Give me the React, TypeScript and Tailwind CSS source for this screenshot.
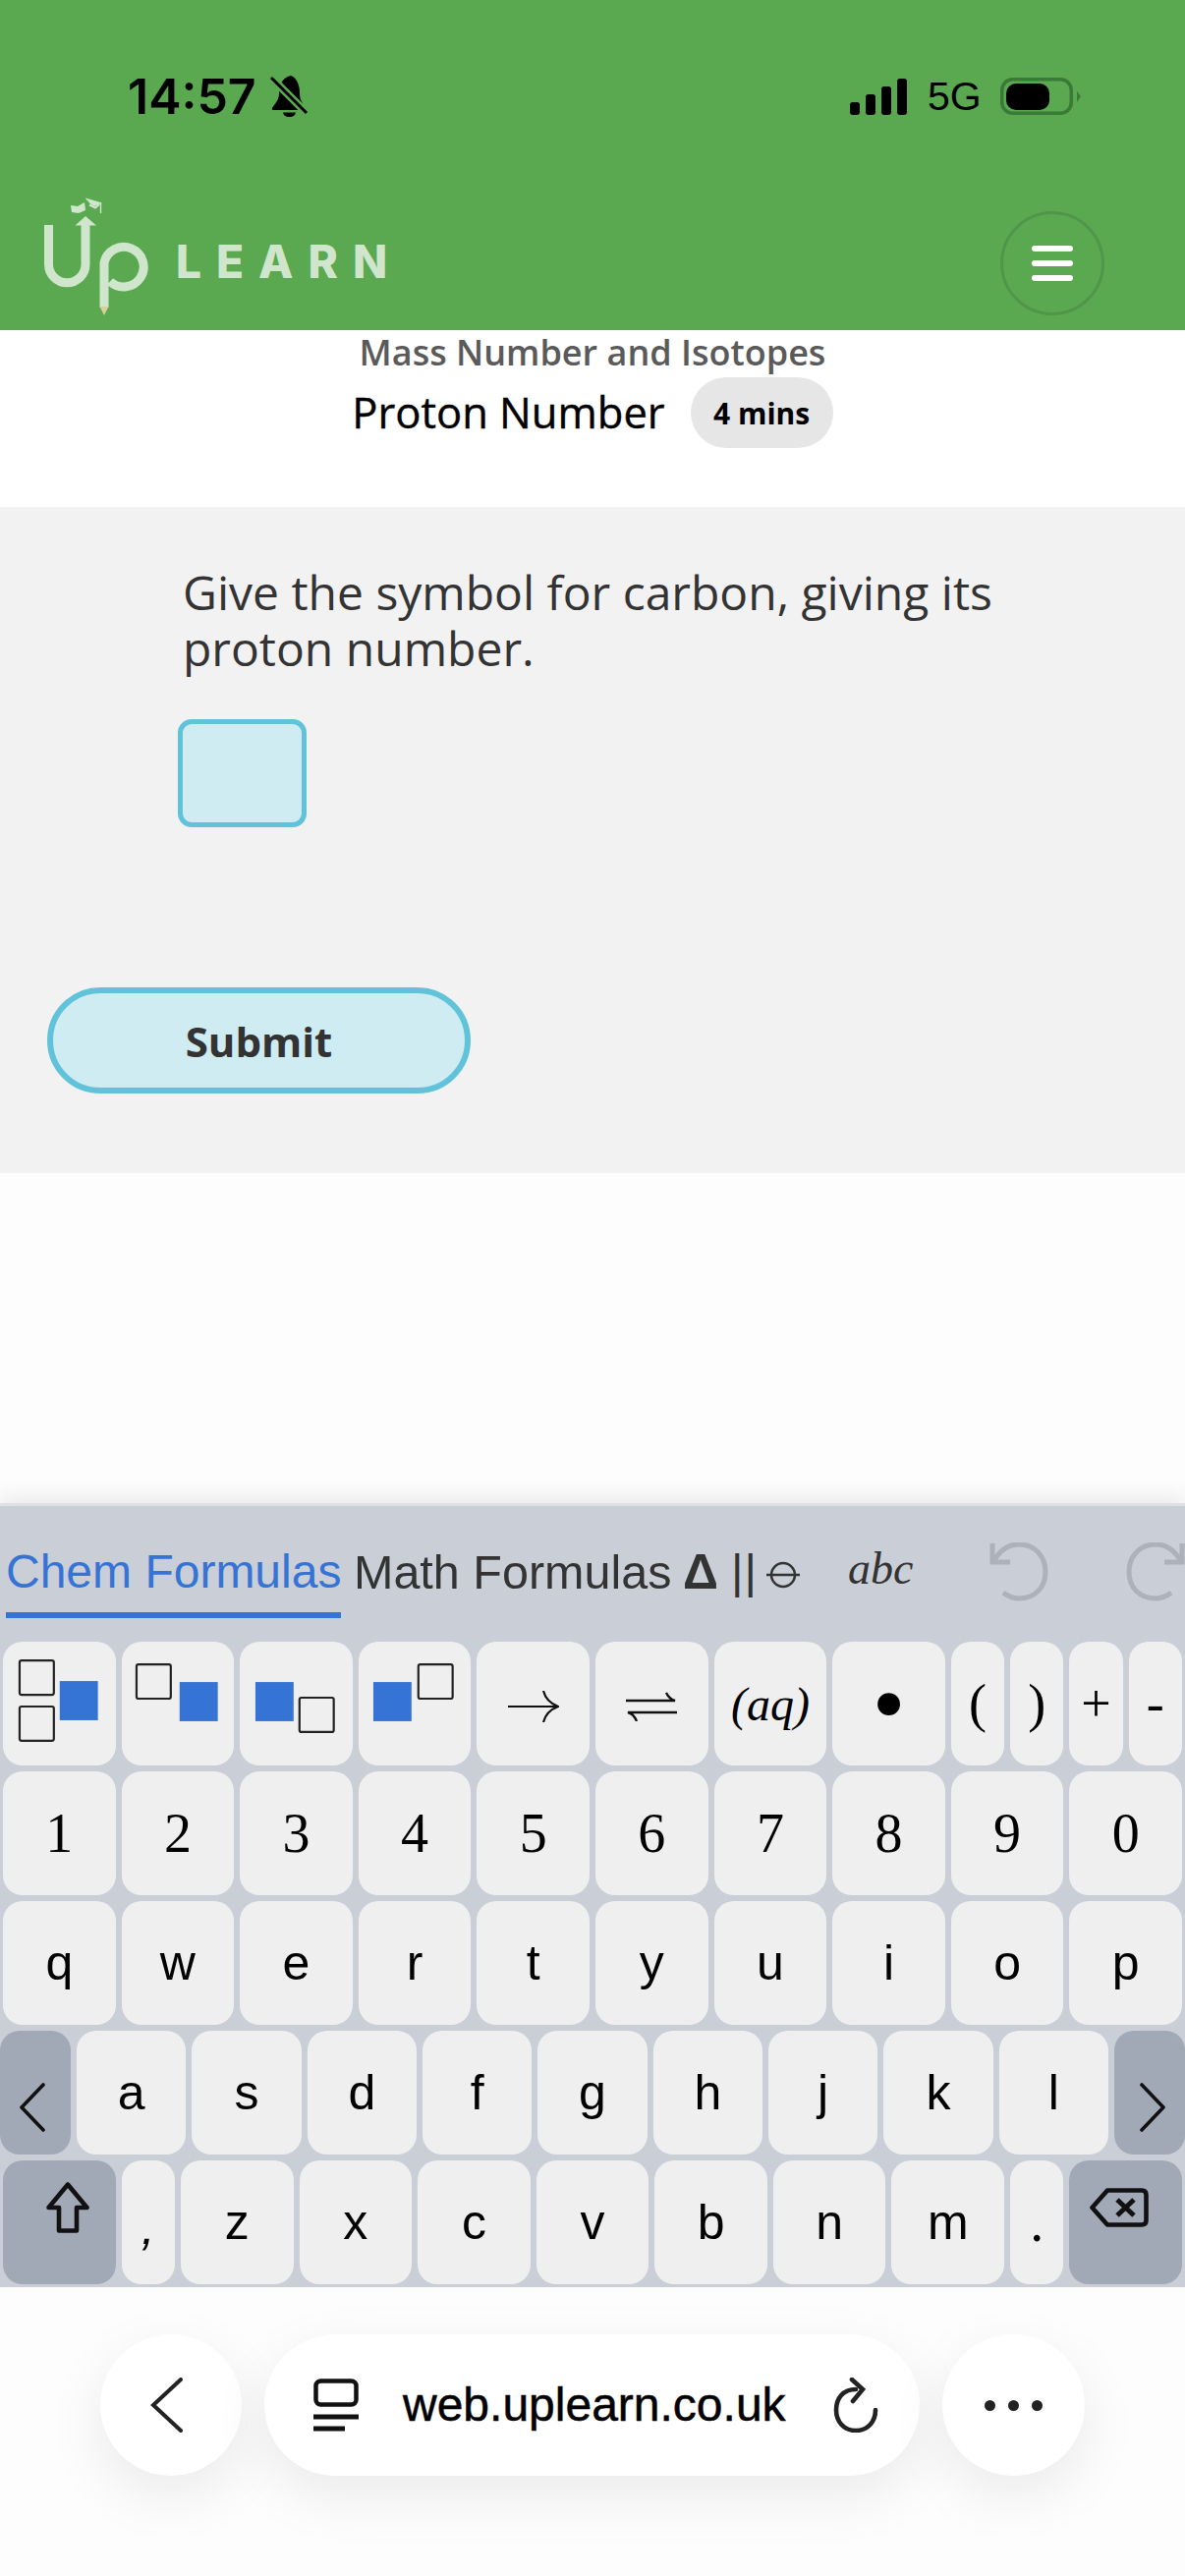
import React from 'react';

const SANS = "font-['Liberation_Sans',Arial,sans-serif]";
const OPEN = "font-['Open_Sans',sans-serif]";
const SERIF = "font-['Liberation_Serif',serif]";

const Key: React.FC<{ className?: string; children?: React.ReactNode }> = ({ className = '', children }) => (
  <div className={`h-[126px] rounded-[20px] bg-[#efeff0] flex items-center justify-center text-black ${className}`}>
    {children}
  </div>
);

const TemplateIcon: React.FC<{ blue: [number, number]; boxes: [number, number][] }> = ({ blue, boxes }) => (
  <svg viewBox="0 0 115 126" className="w-full h-full">
    <rect x={blue[0]} y={blue[1]} width="39" height="40" fill="#3574d4" />
    {boxes.map(([x, y]) => (
      <rect key={y} x={x} y={y} width="35" height="35" rx="2" fill="none" stroke="#222" strokeWidth="2.2" />
    ))}
  </svg>
);

const Logo = () => (
  <svg viewBox="40 27 120 125" className="w-[120px] h-[125px] shrink-0" fill="none">
    <path d="M49.5 59V99A18.75 18.75 0 0 0 87 99V58" stroke="#cfe6cc" strokeWidth="9" />
    <path d="M87 50L98 59.5H76.5Z" fill="#cfe6cc" />
    <path d="M106 143V97.5A20.3 20.3 0 1 1 112 116.5" stroke="#cfe6cc" strokeWidth="9" />
    <path d="M101.5 142H110.5L106 151Z" fill="#d9cf9a" />
    <path d="M72 39L79 40L86 36L87 44L80 47L73 46Z" fill="#cfe6cc" />
    <path d="M87 31.5L104 36.5L96 40L92 37.5L87 32Z" fill="#cfe6cc" />
    <path d="M91 38.5L97 41.5L101 38" stroke="#cfe6cc" strokeWidth="2" />
    <path d="M102.5 37V47" stroke="#cfe6cc" strokeWidth="1.4" />
  </svg>
);

const row2 = ['1', '2', '3', '4', '5', '6', '7', '8', '9', '0'];
const row3 = ['q', 'w', 'e', 'r', 't', 'y', 'u', 'i', 'o', 'p'];
const row4 = ['a', 's', 'd', 'f', 'g', 'h', 'j', 'k', 'l'];
const row5 = ['z', 'x', 'c', 'v', 'b', 'n', 'm'];

const App: React.FC = () => {
  return (
    <div className="w-[1206px] h-[2622px] flex flex-col bg-[#fdfdfd] overflow-hidden">
      <header className="h-[336px] shrink-0 bg-[#5aa850] flex flex-col">
        <div className={`mt-[77px] h-[42px] pl-[130px] pr-[106px] flex items-center justify-between text-black ${SANS}`}>
          <div className="flex items-center">
            <span className="w-[144px] text-[50px] font-semibold leading-none font-['Inter',sans-serif]">14:57</span>
            <svg viewBox="0 0 40 42" className="w-[40px] h-[42px]">
              <path d="M22 0C13 2 10 10 10 18C10 25 6 28 3 33Q2 35 5 35H35Q38 35 37 33C34 28 31 25 31 18C31 10 28 2 22 0Z" fill="#000" />
              <path d="M14 37.5H27C26 41 24 42 20.5 42C17 42 15 41 14 37.5Z" fill="#000" />
              <path d="M0 0L40 40" stroke="#5aa850" strokeWidth="8" />
              <path d="M2 2L38 38" stroke="#000" strokeWidth="3" />
            </svg>
          </div>
          <div className="flex items-center">
            <svg viewBox="0 0 58 37" className="w-[58px] h-[37px]">
              <rect x="0" y="24" width="10" height="13" rx="3" fill="#000" />
              <rect x="16" y="16" width="10" height="21" rx="3" fill="#000" />
              <rect x="32" y="8" width="10" height="29" rx="3" fill="#000" />
              <rect x="48" y="0" width="10" height="37" rx="3" fill="#000" />
            </svg>
            <span className="ml-[21px] w-[53px] text-[41px] leading-none">5G</span>
            <svg viewBox="0 0 82 38" className="ml-[21px] w-[82px] h-[38px]">
              <rect x="1.75" y="1.75" width="70.5" height="34.5" rx="11" fill="none" stroke="#3a7a36" strokeWidth="3.5" />
              <rect x="6" y="6" width="44" height="27" rx="10" fill="#000" />
              <path d="M78 14L82 19L78 25Z" fill="#3a7a36" />
            </svg>
          </div>
        </div>
        <div className="mt-[78px] flex items-start pl-[40px] pr-[82px]">
          <Logo />
          <span className="ml-[19px] mt-[40px] text-[46px] leading-[58px] font-extrabold tracking-[15px] text-[#cfe6cc] font-['Inter',sans-serif]">
            LEARN
          </span>
          <div className="ml-auto mt-[18px] w-[106px] h-[106px] rounded-full border-[3px] border-[#50964a] flex flex-col items-center justify-center gap-[9px]">
            <span className="w-[42px] h-[6px] rounded-full bg-white" />
            <span className="w-[42px] h-[6px] rounded-full bg-white" />
            <span className="w-[42px] h-[6px] rounded-full bg-white" />
          </div>
        </div>
      </header>

      <section className={`h-[180px] shrink-0 bg-white flex flex-col items-center ${OPEN}`}>
        <p className="mt-0 text-[36px] leading-[46px] font-semibold text-[#5a5a5a]">Mass Number and Isotopes</p>
        <div className="mt-[2px] flex items-center">
          <h1 className="text-[43.5px] leading-[72px] text-black [-webkit-text-stroke:0.4px_black]">Proton Number</h1>
          <span className="ml-[26px] h-[72px] w-[145px] rounded-full bg-[#e6e6e6] flex items-center justify-center text-[30px] font-bold text-black">
            4 mins
          </span>
        </div>
      </section>

      <section className={`h-[678px] shrink-0 bg-[#f2f2f2] ${OPEN}`}>
        <p className="ml-[186px] mt-[58px] w-[860px] text-[48px] leading-[57px] text-[#333]">
          Give the symbol for carbon, giving its proton number.
        </p>
        <div className="ml-[181px] mt-[44px] w-[131px] h-[110px] rounded-[14px] border-[5px] border-[#60c3da] bg-[#ceecf2]" />
        <button className="block ml-[48px] mt-[163px] w-[431px] h-[108px] rounded-full border-[6px] border-[#60c3da] bg-[#ceecf2] text-[42px] font-bold text-[#333]">
          Submit
        </button>
      </section>

      <div className="flex-1" />

      <section className={`relative h-[798px] shrink-0 bg-[#c9ced7] border-t-[3px] border-[#dfe0e2] shadow-[0_-8px_18px_rgba(0,0,0,0.07)] ${SANS}`}>
        <div className="h-[138px] pt-[37px] flex items-start">
          <div className="ml-[6px] w-[341px] h-[77px] border-b-[6px] border-[#3574d4] text-[#3574d4] text-[48px] leading-[60px] whitespace-nowrap">
            Chem Formulas
          </div>
          <div className="ml-[13px] w-[326px] text-[#333] text-[48.5px] leading-[60px] whitespace-nowrap">Math Formulas</div>
          <div className="ml-[9px] w-[40px] text-[#333] text-[50px] leading-[60px] font-bold">Δ</div>
          <div className="ml-[9px] w-[24px] text-[#333] text-[48px] leading-[60px] whitespace-nowrap tracking-[1px]">||</div>
          <svg viewBox="0 0 34 28" className="ml-[12px] mt-[19px] w-[34px] h-[28px]" fill="none" stroke="#333" strokeWidth="2.5">
            <circle cx="17" cy="14" r="12" />
            <path d="M0 14H34" />
          </svg>
          <div className={`ml-[49px] mt-[2px] w-[70px] text-[#333] text-[46px] leading-[50px] italic ${SERIF}`}>abc</div>
          <svg viewBox="0 0 60 60" className="ml-[74px] w-[60px] h-[60px]" fill="none" stroke="#acb1ba" strokeWidth="5">
            <path d="M3 1V20H21" />
            <path d="M4 20C10 8 18 2 30 2C46 2 57 14 57 30C57 46 46 57 30 57C24 57 19 55 14 51" />
          </svg>
          <svg viewBox="0 0 60 60" className="ml-[79px] w-[60px] h-[60px]" fill="none" stroke="#acb1ba" strokeWidth="5">
            <path d="M57 1V20H39" />
            <path d="M56 20C50 8 42 2 30 2C14 2 3 14 3 30C3 46 14 57 30 57C36 57 41 55 46 51" />
          </svg>
        </div>

        <div className="flex flex-col gap-[6px]">
          <div className="px-[3px] grid grid-cols-[repeat(20,minmax(0,1fr))] gap-x-[6px]">
            <Key className="col-span-2">
              <TemplateIcon blue={[58, 40]} boxes={[[17, 19], [17, 66]]} />
            </Key>
            <Key className="col-span-2">
              <TemplateIcon blue={[59, 41]} boxes={[[15, 23]]} />
            </Key>
            <Key className="col-span-2">
              <TemplateIcon blue={[16, 41]} boxes={[[61, 57]]} />
            </Key>
            <Key className="col-span-2">
              <TemplateIcon blue={[15, 41]} boxes={[[61, 23]]} />
            </Key>
            <Key className="col-span-2 pt-[6px]">
              <svg viewBox="0 0 52 32" className="w-[52px] h-[32px]" fill="none" stroke="#111" strokeWidth="2.2">
                <path d="M0 16H50" />
                <path d="M36 0C38 8 43 13 51 16C43 19 38 24 36 32" />
              </svg>
            </Key>
            <Key className="col-span-2 pt-[6px]">
              <svg viewBox="0 0 52 30" className="w-[52px] h-[30px]" fill="none" stroke="#111" strokeWidth="2.4">
                <path d="M0 9H50C46 8 43 5 41 1" />
                <path d="M52 21H2C6 22 9 25 11 30" />
              </svg>
            </Key>
            <Key className={`col-span-2 italic text-[48px] pt-[2px] ${SERIF}`}>(aq)</Key>
            <Key className={`col-span-2 text-[96px] leading-none ${SERIF}`}>•</Key>
            <Key className={`text-[54px] ${SERIF}`}>(</Key>
            <Key className={`text-[54px] ${SERIF}`}>)</Key>
            <Key className={`text-[54px] ${SERIF}`}>+</Key>
            <Key className={`text-[54px] ${SERIF}`}>-</Key>
          </div>

          <div className="px-[3px] grid grid-cols-10 gap-x-[6px]">
            {row2.map((k) => (
              <Key key={k} className={`text-[56px] ${SERIF}`}>{k}</Key>
            ))}
          </div>

          <div className="px-[3px] grid grid-cols-10 gap-x-[6px]">
            {row3.map((k) => (
              <Key key={k} className="text-[50px]">{k}</Key>
            ))}
          </div>

          <div className="flex gap-x-[6px]">
            <Key className="w-[72px] shrink-0 !bg-[#a2a9b6] pt-[30px] pr-[7px]">
              <svg viewBox="0 0 28 50" className="w-[28px] h-[50px]" fill="none" stroke="#111" strokeWidth="3.6" strokeLinecap="round" strokeLinejoin="round">
                <path d="M25 2L3 25L25 48" />
              </svg>
            </Key>
            {row4.map((k) => (
              <Key key={k} className="flex-1 text-[50px]">{k}</Key>
            ))}
            <Key className="w-[72px] shrink-0 !bg-[#a2a9b6] pt-[30px] pl-[7px]">
              <svg viewBox="0 0 28 50" className="w-[28px] h-[50px]" fill="none" stroke="#111" strokeWidth="3.6" strokeLinecap="round" strokeLinejoin="round">
                <path d="M3 2L25 25L3 48" />
              </svg>
            </Key>
          </div>

          <div className="px-[3px] grid grid-cols-[repeat(20,minmax(0,1fr))] gap-x-[6px]">
            <Key className="col-span-2 !bg-[#a2a9b6] pb-[30px] pl-[17px]">
              <svg viewBox="0 0 44 52" className="w-[44px] h-[52px]" fill="none" stroke="#111" strokeWidth="4.6" strokeLinejoin="round">
                <path d="M22 2.5L41.5 26H31V49.5H13V26H2.5Z" />
              </svg>
            </Key>
            <Key className="text-[50px] italic pt-[10px]">,</Key>
            {row5.map((k) => (
              <Key key={k} className="col-span-2 text-[50px]">{k}</Key>
            ))}
            <Key className={`text-[56px] ${SERIF}`}>.</Key>
            <Key className="col-span-2 !bg-[#a2a9b6] pb-[30px] pr-[14px]">
              <svg viewBox="0 0 60 40" className="w-[60px] h-[40px]" fill="none" stroke="#111" strokeWidth="4.6" strokeLinejoin="round">
                <path d="M18 2.5H53Q57.5 2.5 57.5 7V33Q57.5 37.5 53 37.5H18L2.5 20Z" />
                <path d="M28 12L45 28M45 12L28 28" strokeWidth="5" />
              </svg>
            </Key>
          </div>
        </div>
      </section>

      <nav className={`relative h-[294px] shrink-0 pt-[48px] flex items-start pl-[102px] ${SANS}`}>
        <button className="w-[144px] h-[144px] rounded-full bg-white shadow-[0_20px_60px_rgba(0,0,0,0.08)] flex items-center justify-center pr-[9px]">
          <svg viewBox="0 0 33 56" className="w-[33px] h-[56px]" fill="none" stroke="#222" strokeWidth="4" strokeLinecap="round">
            <path d="M31 2L3 28L31 54" />
          </svg>
        </button>
        <div className="ml-[23px] w-[667px] h-[144px] rounded-full bg-white shadow-[0_20px_60px_rgba(0,0,0,0.08)] flex items-center pl-[50px]">
          <svg viewBox="0 0 46 54" className="w-[46px] h-[54px] shrink-0" fill="none" stroke="#111" strokeWidth="4.5">
            <rect x="2.5" y="2.5" width="41" height="24" rx="5" />
            <path d="M0 39H46" strokeWidth="5" />
            <path d="M0 51H32" strokeWidth="5" />
          </svg>
          <span className="ml-[45px] w-[392px] text-[48px] leading-none text-black whitespace-nowrap [-webkit-text-stroke:0.5px_black]">
            web.uplearn.co.uk
          </span>
          <svg viewBox="0 0 46 56" className="ml-[46px] w-[46px] h-[56px]" fill="none" stroke="#222" strokeWidth="4.6" strokeLinecap="round">
            <path d="M23 12C10 12 3 21 3 33C3 45 11 54 23 54C35 54 43 45 43 33" />
            <path d="M19 2L30 12L20 24" />
          </svg>
        </div>
        <button className="ml-[23px] w-[145px] h-[144px] rounded-full bg-white shadow-[0_20px_60px_rgba(0,0,0,0.08)] flex items-center justify-center gap-[13px]">
          <span className="w-[11px] h-[11px] rounded-full bg-[#222]" />
          <span className="w-[11px] h-[11px] rounded-full bg-[#222]" />
          <span className="w-[11px] h-[11px] rounded-full bg-[#222]" />
        </button>
      </nav>
    </div>
  );
};

export default App;
